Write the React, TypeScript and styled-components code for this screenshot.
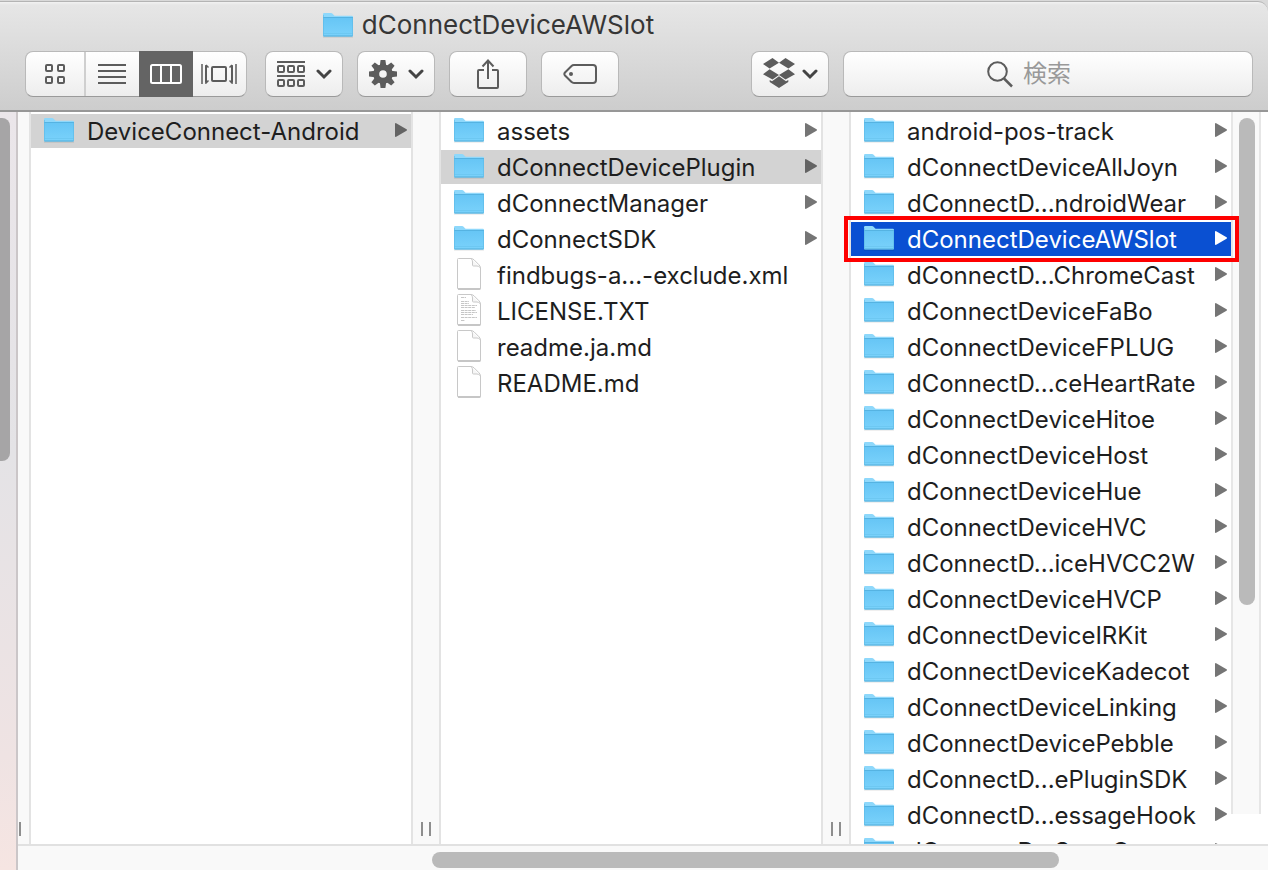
import React from "react";
import styled, { createGlobalStyle, css } from "styled-components";

const GlobalStyle = createGlobalStyle`
  *, *::before, *::after { box-sizing: border-box; }
  body {
    margin: 0;
    overflow: hidden;
    background: #ffffff;
    font-family: Inter, "Noto Sans CJK JP", sans-serif;
    color: #1e1e1e;
  }
  button, input { font: inherit; color: inherit; }
  ul { margin: 0; padding: 0; list-style: none; }
`;

const Desktop = styled.div`
  display: flex;
  flex-direction: column;
  height: 100vh;
  background: #d9d9d9;
  padding-top: 1px;
`;

const Header = styled.header`
  flex: none;
  height: 111px;
  border-top: 1px solid #b4b4b4;
  border-bottom: 2px solid #979797;
  border-top-right-radius: 10px;
  background: linear-gradient(#f2f2f2, #e6e6e6 3px, #cdcdcd);
  display: flex;
  flex-direction: column;
`;

const TitleBar = styled.div`
  display: flex;
  align-items: center;
  justify-content: center;
  gap: 8px;
  height: 49px;
  padding: 0 292px 4px 0;
`;

const Title = styled.h1`
  margin: 0;
  font-size: 26px;
  line-height: 32px;
  font-weight: 400;
  color: #363636;
`;

const Toolbar = styled.div`
  display: flex;
  gap: 14px;
  padding: 0 15px 0 25px;
`;

const plate = css`
  height: 46px;
  border: 1px solid #b9b9b9;
  border-bottom-color: #9a9a9a;
  border-radius: 8px;
  background: linear-gradient(#ffffff, #ededed);
`;

const Segmented = styled.div`
  ${plate}
  flex: none;
  display: flex;
  width: 222px;
  margin-right: 4px;
`;

const Segment = styled.button<{ $active?: boolean; $divided?: boolean }>`
  flex: 1 1 ${(p) => (p.$divided ? 6 : 0)}px;
  display: flex;
  align-items: center;
  justify-content: center;
  padding: 0;
  border: 0;
  border-right: ${(p) => (p.$divided ? "2px solid #cfcfcf" : "0")};
  margin: ${(p) => (p.$active ? "-1px 0" : "0")};
  background: ${(p) => (p.$active ? "#646464" : "transparent")};
  color: ${(p) => (p.$active ? "#ffffff" : "#5c5c5c")};
`;

const ToolButton = styled.button<{ $end?: boolean; $gap?: number }>`
  ${plate}
  flex: none;
  display: flex;
  align-items: center;
  justify-content: center;
  gap: ${(p) => p.$gap ?? 11}px;
  width: 78px;
  padding: 0;
  color: #5c5c5c;
  margin-left: ${(p) => (p.$end ? "auto" : "0")};
`;

const Search = styled.label`
  ${plate}
  flex: 0 1 410px;
  min-width: 0;
  display: flex;
  align-items: center;
  gap: 10px;
  padding-left: 143px;
  color: #5c5c5c;
`;

const SearchInput = styled.input`
  flex: 1;
  min-width: 0;
  padding: 0;
  border: 0;
  outline: 0;
  background: transparent;
  font-size: 24px;
  line-height: 32px;
  &::placeholder { color: #999999; opacity: 1; }
`;

const Body = styled.div`
  flex: 1;
  min-height: 0;
  display: flex;
  background: #ffffff;
`;

const Sidebar = styled.aside`
  flex: none;
  width: 18px;
  padding-top: 6px;
  border-right: 2px solid #cbc6c8;
  background: linear-gradient(#ebe6ea, #e4e3e6 45%, #efe3e3 85%, #f6e5e2);
`;

const SidebarThumb = styled.div`
  width: 10px;
  height: 343px;
  border-radius: 0 8px 8px 0;
  background: #a6a5a6;
`;

const Main = styled.main`
  flex: 1;
  min-width: 0;
  display: flex;
  flex-direction: column;
`;

const Browser = styled.div`
  flex: 1;
  min-height: 0;
  display: flex;
  overflow: hidden;
  padding-right: 7px;
`;

const Gutter = styled.div<{ $first?: boolean }>`
  flex: none;
  width: ${(p) => (p.$first ? 13 : 30)}px;
  display: flex;
  align-items: flex-end;
  justify-content: flex-end;
  gap: 6px;
  overflow: hidden;
  padding: 0 8px 8px 0;
  border: solid #e3e3e3;
  border-width: ${(p) => (p.$first ? "0 2px 0 0" : "0 2px")};
  background: #f9f9f9;
`;

const Grip = styled.span`
  flex: none;
  width: 2px;
  height: 14px;
  background: #8e8e8e;
`;

const Column = styled.ul`
  flex: 1 1 0;
  min-width: 0;
  display: flex;
  flex-direction: column;
  gap: 2px;
  padding-top: 2px !important;
`;

type Tone = "plain" | "path" | "active";

const Item = styled.li<{ $marked?: boolean }>`
  position: relative;
  flex: none;
  ${(p) =>
    p.$marked &&
    css`
      &::after {
        content: "";
        position: absolute;
        z-index: 1;
        inset: -6px -8px -6px -7px;
        border: 4px solid #fe0000;
        pointer-events: none;
      }
    `}
`;

const Row = styled.button<{ $tone: Tone }>`
  display: flex;
  align-items: center;
  width: 100%;
  height: 34px;
  padding: 0 4px 2px 12px;
  border: 0;
  text-align: left;
  background: ${(p) =>
    p.$tone === "active" ? "#0a50d2" : p.$tone === "path" ? "#d3d3d3" : "transparent"};
  color: ${(p) => (p.$tone === "active" ? "#ffffff" : "#1e1e1e")};
`;

const Name = styled.span`
  flex: 1;
  min-width: 0;
  margin-left: 12px;
  padding-top: 4px;
  white-space: nowrap;
  font-size: 24px;
  line-height: 30px;
`;

const Arrow = styled.svg<{ $tone: Tone }>`
  flex: none;
  fill: ${(p) => (p.$tone === "active" ? "#ffffff" : p.$tone === "path" ? "#636363" : "#757575")};
`;

const ScrollTrack = styled.div`
  flex: none;
  width: 30px;
  margin-bottom: 30px;
  padding: 6px 4px 0 6px;
  border: solid #e6e6e6;
  border-width: 0 2px;
  background: #f9f9f9;
`;

const ScrollThumb = styled.div`
  width: 16px;
  height: 487px;
  border-radius: 8px;
  background: #bababa;
`;

const BottomBar = styled.div`
  flex: none;
  height: 26px;
  padding-top: 6px;
  border-top: 2px solid #e1e1e1;
  background: #f9f9f9;
`;

const BottomThumb = styled.div`
  width: 50.2%;
  height: 16px;
  margin-left: 33.1%;
  border-radius: 8px;
  background: #bababa;
`;

const FolderIcon = () => (
  <svg width="32" height="28" viewBox="0 0 32 28" aria-hidden="true">
    <defs>
      <linearGradient id="folder" x1="0" y1="0" x2="0" y2="1">
        <stop offset="0" stopColor="#66c5f5" />
        <stop offset="1" stopColor="#7ad2fb" />
      </linearGradient>
    </defs>
    <path d="M1 25.500h30v1H1z" fill="#000" opacity=".13" />
    <path d="M1 3.200Q1 2 2.200 2H9q1 0 1.600.8L12 4.200q.5.600 1.400.600h16.400Q31 4.800 31 6v18.500H1z" fill="#8ed8fb" />
    <path d="M1 6.500h30v18q0 1-1 1H2q-1 0-1-1z" fill="url(#folder)" />
    <path d="M1 6.500h30" stroke="#55b3e2" fill="none" />
    <path d="M1.500 22.500h29" stroke="#6dc8f2" fill="none" />
    <path d="M1.500 25h29" stroke="#52acd8" fill="none" />
    <path d="M1.500 4v21M30.500 6.500v18.500" stroke="#5cb9e6" opacity=".6" fill="none" />
  </svg>
);

const FileIcon = ({ lines }: { lines?: boolean }) => (
  <svg width="32" height="34" viewBox="0 0 32 34" aria-hidden="true">
    <path d="M4.500 2.500q0-1 1-1H18q1.500 0 3 1.300l5 5q1.500 1.500 1.500 3.200v20q0 1-1 1h-21q-1 0-1-1z" fill="#fff" stroke="#c8c8c8" />
    <path d="M5 32h22.500" stroke="#a9a9a9" fill="none" />
    <path d="M18.500 2q1 1 1 3v3q0 1 1 1h3.500q2 0 3 1.500" fill="#f6f6f6" stroke="#c9c9c9" />
    {lines && (
      <path
        d="M8 4.500h5M8 8.500h8M8 10.500h8M8 12.500h16M8 14.500h14M8 17.500h15M8 19.500h16M8 21.500h12M8 24.500h16M8 27.500h4"
        stroke="#c6c6c6"
        strokeDasharray="3 .6"
        fill="none"
      />
    )}
  </svg>
);

const GridIcon = () => (
  <svg width="20" height="20" fill="none" stroke="currentColor" strokeWidth="2" aria-hidden="true">
    {[1, 13].map((y) => [1, 13].map((x) => <rect key={`${x}-${y}`} x={x} y={y} width="6" height="6" rx="1" />))}
  </svg>
);

const ListIcon = () => (
  <svg width="28" height="20" stroke="currentColor" strokeWidth="2" aria-hidden="true">
    <path d="M0 1h28M0 7h28M0 13h28M0 19h28" />
  </svg>
);

const ColumnsIcon = () => (
  <svg width="32" height="20" fill="none" stroke="currentColor" strokeWidth="2" aria-hidden="true">
    <rect x="1" y="1" width="30" height="18" rx="1.500" />
    <path d="M11 1v18M21 1v18" />
  </svg>
);

const FlowIcon = () => (
  <svg width="36" height="20" fill="none" stroke="currentColor" strokeWidth="1.500" aria-hidden="true">
    <rect x="11" y="3" width="14" height="14" rx="1" strokeWidth="2" />
    <path d="M1 0v20M35 0v20M5 1v18l2.500-2.500M5 1l2.500 2.500M31 1v18l-2.500-2.500M31 1l-2.500 2.500" />
    <path d="M5 1.500v17M31 1.500v17" strokeWidth="2" />
  </svg>
);

const ArrangeIcon = () => (
  <svg width="28" height="26" fill="none" stroke="currentColor" strokeWidth="2" aria-hidden="true">
    <path d="M0 1h28M0 15h28" />
    {[5, 19].map((y) => [1, 11, 21].map((x) => <rect key={`${x}-${y}`} x={x} y={y} width="6" height="6" rx="1" />))}
  </svg>
);

const ChevronIcon = () => (
  <svg width="16" height="11" fill="none" stroke="#444" strokeWidth="3" strokeLinecap="round" strokeLinejoin="miter" aria-hidden="true">
    <path d="M2 2l6 6 6-6" />
  </svg>
);

const GearIcon = () => (
  <svg width="28" height="28" viewBox="-14 -14 28 28" aria-hidden="true">
    {[0, 45, 90, 135, 180, 225, 270, 315].map((a) => (
      <path key={a} d="M-3.200-8L-2.400-14h4.800L3.200-8z" fill="currentColor" transform={`rotate(${a})`} />
    ))}
    <circle r="6.800" fill="none" stroke="currentColor" strokeWidth="6" />
  </svg>
);

const ShareIcon = () => (
  <svg width="22" height="30" fill="none" stroke="currentColor" strokeWidth="2" aria-hidden="true">
    <path d="M7 11H2q-1 0-1 1v16q0 1 1 1h18q1 0 1-1V12q0-1-1-1h-5" />
    <path d="M11 20V2M5.500 7.500L11 1.500l5.500 6" />
  </svg>
);

const TagIcon = () => (
  <svg width="34" height="20" fill="none" stroke="currentColor" strokeWidth="2" aria-hidden="true">
    <path d="M11 1h19q3 0 3 3v12q0 3-3 3H11q-1.500 0-2.700-1.200L2 11.500q-1.300-1.500 0-3l6.300-6.300Q9.500 1 11 1z" />
    <circle cx="8" cy="10" r="2" fill="currentColor" stroke="none" />
  </svg>
);

const DropboxIcon = () => (
  <svg width="32" height="32" fill="currentColor" aria-hidden="true">
    <path d="M9.500 0L16 4.800 6.600 10.500 0 5.900zM22.500 0L32 5.900 25.400 10.500 16 4.800zM0 16.200L6.600 11.200 16 16.900 9.500 21.500zM32 16.200L25.400 11.200 16 16.900l6.500 4.600z" />
    <path d="M16 18.300l7 5 2.300-1.200v2L16 30l-9.300-5.900v-2l2.300 1.200z" />
  </svg>
);

const SearchIcon = () => (
  <svg width="26" height="27" fill="none" stroke="currentColor" strokeWidth="2" aria-hidden="true">
    <circle cx="10.500" cy="10.500" r="9.300" />
    <path d="M17 17.500l8 8" strokeWidth="2.500" />
  </svg>
);

interface Entry {
  name: string;
  kind?: "file" | "text";
  tone?: Tone;
}

const columns: { label: string; entries: Entry[] }[] = [
  { label: "Repository", entries: [{ name: "DeviceConnect-Android", tone: "path" }] },
  {
    label: "DeviceConnect-Android",
    entries: [
      { name: "assets" },
      { name: "dConnectDevicePlugin", tone: "path" },
      { name: "dConnectManager" },
      { name: "dConnectSDK" },
      { name: "findbugs-a...-exclude.xml", kind: "file" },
      { name: "LICENSE.TXT", kind: "text" },
      { name: "readme.ja.md", kind: "file" },
      { name: "README.md", kind: "file" },
    ],
  },
  {
    label: "dConnectDevicePlugin",
    entries: [
      { name: "android-pos-track" },
      { name: "dConnectDeviceAllJoyn" },
      { name: "dConnectD...ndroidWear" },
      { name: "dConnectDeviceAWSlot", tone: "active" },
      { name: "dConnectD...ChromeCast" },
      { name: "dConnectDeviceFaBo" },
      { name: "dConnectDeviceFPLUG" },
      { name: "dConnectD...ceHeartRate" },
      { name: "dConnectDeviceHitoe" },
      { name: "dConnectDeviceHost" },
      { name: "dConnectDeviceHue" },
      { name: "dConnectDeviceHVC" },
      { name: "dConnectD...iceHVCC2W" },
      { name: "dConnectDeviceHVCP" },
      { name: "dConnectDeviceIRKit" },
      { name: "dConnectDeviceKadecot" },
      { name: "dConnectDeviceLinking" },
      { name: "dConnectDevicePebble" },
      { name: "dConnectD...ePluginSDK" },
      { name: "dConnectD...essageHook" },
      { name: "dConnectD...SonyCamera" },
    ],
  },
];

const EntryRow = ({ name, kind, tone = "plain" }: Entry) => (
  <Item $marked={tone === "active"}>
    <Row type="button" $tone={tone}>
      {kind ? <FileIcon lines={kind === "text"} /> : <FolderIcon />}
      <Name>{name}</Name>
      {!kind && (
        <Arrow $tone={tone} width="12" height="14" aria-hidden="true">
          <path d="M0 1q0-1.300 1.200-.8L11.500 6.300q1 .7 0 1.400L1.200 13.800Q0 14.300 0 13z" />
        </Arrow>
      )}
    </Row>
  </Item>
);

export default function App() {
  return (
    <>
      <GlobalStyle />
      <Desktop>
        <Header>
          <TitleBar>
            <FolderIcon />
            <Title>dConnectDeviceAWSlot</Title>
          </TitleBar>
          <Toolbar>
            <Segmented role="group" aria-label="View">
              <Segment type="button" $divided aria-label="Icons"><GridIcon /></Segment>
              <Segment type="button" aria-label="List"><ListIcon /></Segment>
              <Segment type="button" $active aria-pressed="true" aria-label="Columns"><ColumnsIcon /></Segment>
              <Segment type="button" aria-label="Cover Flow"><FlowIcon /></Segment>
            </Segmented>
            <ToolButton type="button" aria-label="Arrange"><ArrangeIcon /><ChevronIcon /></ToolButton>
            <ToolButton type="button" aria-label="Actions"><GearIcon /><ChevronIcon /></ToolButton>
            <ToolButton type="button" aria-label="Share"><ShareIcon /></ToolButton>
            <ToolButton type="button" aria-label="Tags"><TagIcon /></ToolButton>
            <ToolButton type="button" $end $gap={7} aria-label="Dropbox"><DropboxIcon /><ChevronIcon /></ToolButton>
            <Search>
              <SearchIcon />
              <SearchInput type="text" placeholder="検索" aria-label="検索" />
            </Search>
          </Toolbar>
        </Header>
        <Body>
          <Sidebar><SidebarThumb /></Sidebar>
          <Main>
            <Browser>
              {columns.map((column, index) => (
                <React.Fragment key={column.label}>
                  <Gutter $first={index === 0}><Grip /><Grip /></Gutter>
                  <Column aria-label={column.label}>
                    {column.entries.map((entry) => <EntryRow key={entry.name} {...entry} />)}
                  </Column>
                </React.Fragment>
              ))}
              <ScrollTrack><ScrollThumb /></ScrollTrack>
            </Browser>
            <BottomBar><BottomThumb /></BottomBar>
          </Main>
        </Body>
      </Desktop>
    </>
  );
}
